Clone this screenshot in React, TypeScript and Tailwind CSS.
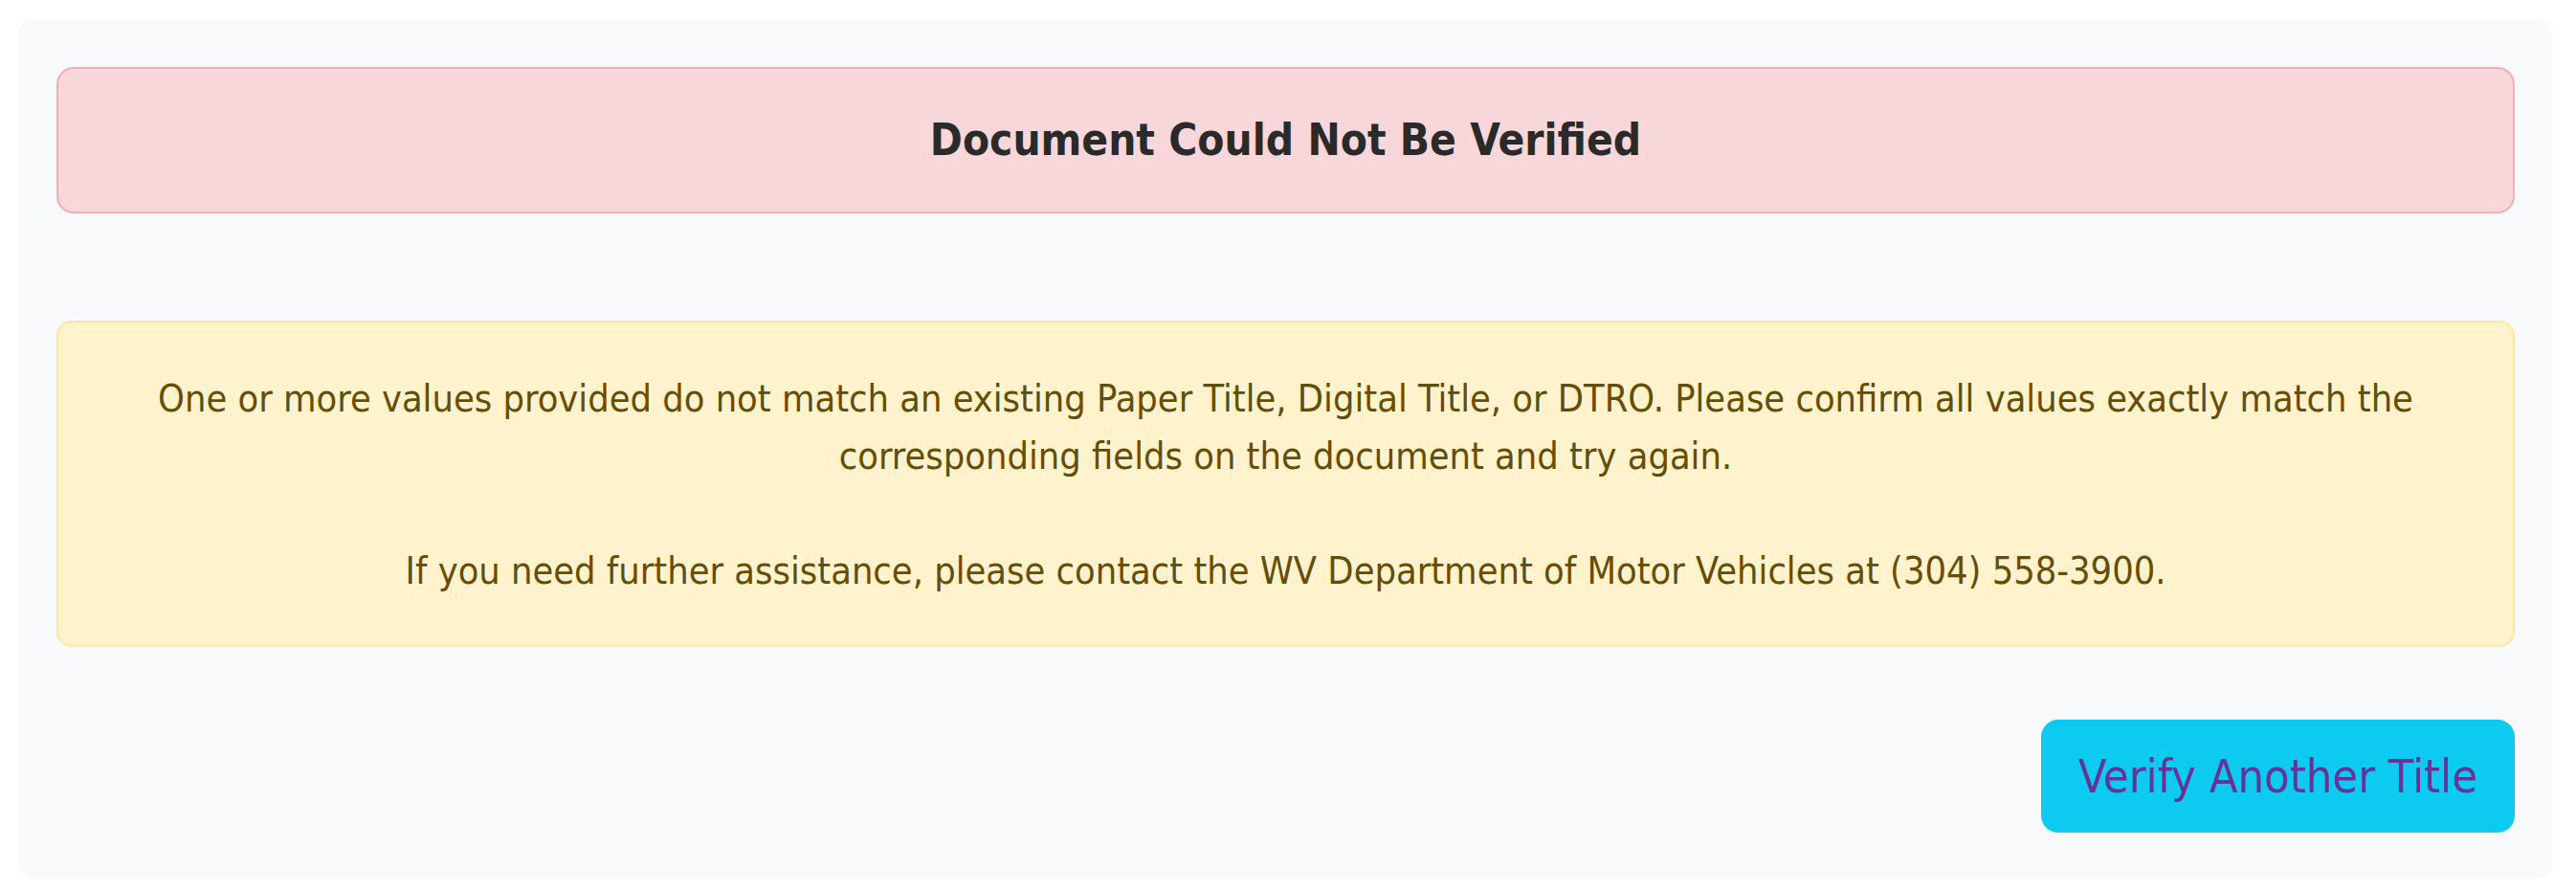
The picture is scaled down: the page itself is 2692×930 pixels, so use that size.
export default function App() {
  return (
    <div className="min-h-[930px] bg-white pl-[19px] pr-[24px] pt-[20px] font-['DejaVu_Sans_Condensed','DejaVu_Sans',sans-serif]">
      <div className="rounded-[16px] bg-[#f8f9fa] px-[40px] pt-[50px] pb-[48px]">
        <div className="rounded-[18px] border-[2.5px] border-[#f1aeb5] bg-[#f8d7da] py-[47.5px] text-center">
          <h4 className="text-[45.6px] leading-[54px] font-bold text-[#2a2a2a]">Document Could Not Be Verified</h4>
        </div>

        <div className="mt-[112px] rounded-[16px] border-[2.5px] border-[#ffe69c] bg-[#fff3cd] px-[40px] py-[48.5px] text-center text-[39.4px] leading-[60px] text-[#664d03]">
          <p>
            One or more values provided do not match an existing Paper Title, Digital Title, or DTRO. Please confirm all
            values exactly match the corresponding fields on the document and try again.
          </p>
          <br />
          <p>If you need further assistance, please contact the WV Department of Motor Vehicles at (304) 558-3900.</p>
        </div>

        <div className="mt-[76px] flex justify-end">
          <button
            type="button"
            className="rounded-[18px] border-2 border-[#0dcaf0] bg-[#0dcaf0] px-[37px] py-[19.5px] text-[48.4px] leading-[75px] text-[#663399]"
          >
            Verify Another Title
          </button>
        </div>
      </div>
    </div>
  );
}
